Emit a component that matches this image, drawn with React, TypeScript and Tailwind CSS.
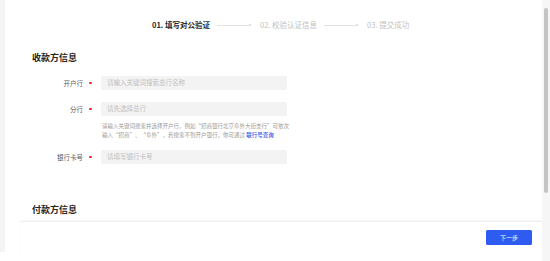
import React from "react";

const steps = [
  { label: "01. 填写对公验证", active: true },
  { label: "02. 校验认证信息", active: false },
  { label: "03. 提交成功", active: false },
];

const Field = ({ label, placeholder }: { label: string; placeholder: string }) => (
  <div className="flex items-center">
    <span className="w-[51px] text-right text-[6.5px] leading-[14px] text-[#595959]">{label}</span>
    <span className="w-[18px] flex pl-[6px]">
      <span className="w-[2.5px] h-[2.5px] rounded-full bg-[#f5222d]" />
    </span>
    <div className="w-[186px] h-[14px] bg-[#f3f3f3] rounded-[1px] pl-[6px] flex items-center text-[6.5px] text-[#bfbfbf]">
      {placeholder}
    </div>
  </div>
);

export default function App() {
  return (
    <div
      className="w-[550px] h-[261px] flex bg-white overflow-hidden"
      style={{ fontFamily: '"Noto Sans CJK SC", "Noto Sans", sans-serif' }}
    >
      <div className="w-[5px] h-[252px] bg-[#f4f4f4]" />

      <div className="flex-1 flex flex-col h-[261px]">
        <div className="flex-1">
          {/* steps */}
          <div className="mt-[20px] h-[10px] pl-[147px] flex items-center text-[7.5px] leading-[10px]">
            {steps.map((s, i) => (
              <React.Fragment key={s.label}>
                <span className={s.active ? "font-semibold text-[#262626]" : "text-[#bfbfbf]"}>{s.label}</span>
                {i < steps.length - 1 && (
                  <span className="ml-[7px] w-[34px] mr-[9px] flex items-center">
                    <span className="flex-1 h-px bg-[#e3e3e3]" />
                    <span className="w-[2px] h-[2px] rounded-full bg-[#d9d9d9]" />
                  </span>
                )}
              </React.Fragment>
            ))}
          </div>

          <div className="pl-[27px]">
            <h2 className="mt-[22px] text-[9px] leading-[12px] font-semibold text-[#262626]">收款方信息</h2>

            <div className="mt-[12px]">
              <Field label="开户行" placeholder="请输入关键词搜索总行名称" />
            </div>
            <div className="mt-[12px]">
              <Field label="分行" placeholder="请先选择总行" />
            </div>
            <div className="mt-[6px] ml-[70px] w-[192px] text-[5.5px] leading-[9px] text-[#999999]">
              <p className="whitespace-nowrap">请输入关键词搜索并选择开户行，例如“招商银行北京阜外大街支行”可依次</p>
              <p className="whitespace-nowrap">
                输入“招商”、“阜外”，若搜索不到开户银行，你可通过{" "}
                <span className="text-[#2f54eb] font-medium">联行号查询</span>
              </p>
            </div>
            <div className="mt-[10px]">
              <Field label="银行卡号" placeholder="请填写银行卡号" />
            </div>

            <h2 className="mt-[40px] text-[9px] leading-[12px] font-semibold text-[#262626]">付款方信息</h2>
          </div>
        </div>

        <div className="h-[40px] ml-[15px] border-t border-[#f0f0f0] shadow-[0_-1px_2px_rgba(0,0,0,0.03)] flex justify-end pr-[10px] pt-[8px]">
          <button className="w-[46px] h-[15px] rounded-[1.5px] bg-[#2e5bf0] text-white text-[6px] leading-[15px]">
            下一步
          </button>
        </div>
      </div>

      <div className="w-[8px] h-[261px] bg-[#f6f6f6] pt-[8px] pl-[2px]">
        <div className="w-[4px] h-[185px] rounded-full bg-[#c4c4c4]" />
      </div>
    </div>
  );
}
